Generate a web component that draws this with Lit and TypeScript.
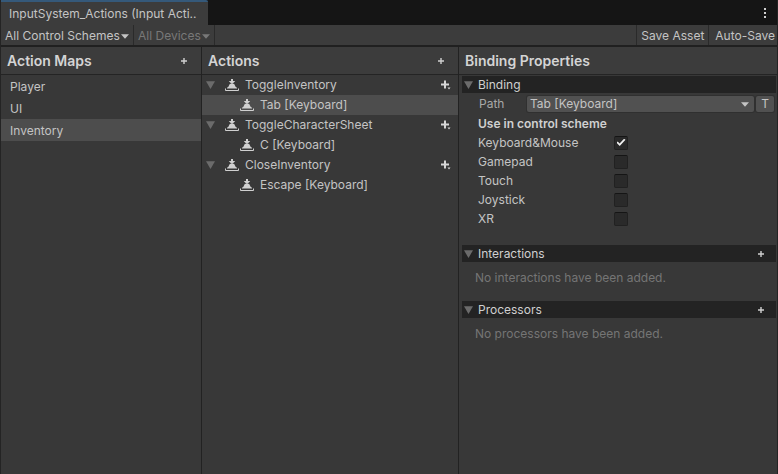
import { LitElement, html, css, svg } from "lit";
import { customElement, state } from "lit/decorators.js";
import { classMap } from "lit/directives/class-map.js";

interface Action {
  name: string;
  bindings: string[];
}

const MAPS = ["Player", "UI", "Inventory"];

const ACTIONS: Action[] = [
  { name: "ToggleInventory", bindings: ["Tab [Keyboard]"] },
  { name: "ToggleCharacterSheet", bindings: ["C [Keyboard]"] },
  { name: "CloseInventory", bindings: ["Escape [Keyboard]"] },
];

const SCHEMES = ["Keyboard&Mouse", "Gamepad", "Touch", "Joystick", "XR"];

const fold = html`<svg class="fold" width="9" height="8" viewBox="0 0 9 8" aria-hidden="true">
  <path d="M0 0.3H9L4.5 8Z" fill="#6b6b6b" />
</svg>`;

const caret = html`<svg class="caret" width="8" height="5" viewBox="0 0 8 5" aria-hidden="true">
  <path d="M0 0.3H8L4 4.8Z" fill="currentColor" />
</svg>`;

const plus = html`<svg width="8" height="8" viewBox="0 0 8 8" aria-hidden="true">
  <path d="M3.3 1H4.7V3.3H7V4.7H4.7V7H3.3V4.7H1V3.3H3.3Z" fill="#d0d0d0" />
</svg>`;

const plusMenu = html`<svg width="11" height="10" viewBox="0 0 11 10" aria-hidden="true">
  <path d="M4 0.5H6V3.5H9V5.5H6V8.5H4V5.5H1V3.5H4Z" fill="#d6d6d6" />
  <path d="M7.5 7.5H10.5L9 9.5Z" fill="#d6d6d6" />
</svg>`;

const press = html`<svg class="press" width="14" height="12" viewBox="0 0 14 12" aria-hidden="true">
  ${svg`
    <path d="M6 0H8V2H10.2L7.6 4.8H6.4L3.8 2H6Z" fill="#d0d0d0" />
    <path d="M2 9.5V8.8C3.2 8.4 3.7 7.6 4 6.6C4.3 5.6 4.7 5 5.6 4.8H8.4C9.3 5 9.7 5.6 10 6.6C10.3 7.6 10.8 8.4 12 8.8V9.5Z" fill="#d0d0d0" />
    <path d="M0.5 9.5V11.5H13.5V9.5" fill="none" stroke="#d0d0d0" stroke-width="1" />
  `}
</svg>`;

@customElement("app-root")
export class AppRoot extends LitElement {
  @state() private selectedMap = "Inventory";
  @state() private selectedBinding = "Tab [Keyboard]";

  static styles = css`
    :host {
      display: flex;
      flex-direction: column;
      min-height: 100vh;
      box-sizing: border-box;
      background: #383838;
      color: #c4c4c4;
      font: 12px/16px Inter, "Noto Sans", sans-serif;
      border-left: 1px solid #242424;
      border-right: 1px solid #242424;
    }
    * {
      box-sizing: border-box;
    }
    button,
    select {
      font: inherit;
      color: inherit;
      border: 0;
      margin: 0;
      padding: 0;
      background: none;
      appearance: none;
      border-radius: 0;
      text-align: left;
    }
    h2,
    h3,
    p,
    ul {
      margin: 0;
      padding: 0;
      list-style: none;
    }
    svg {
      display: block;
      flex: none;
    }
    .tabs {
      display: flex;
      justify-content: space-between;
      align-items: center;
      height: 25px;
      background: #151515;
    }
    .tab {
      height: 25px;
      padding: 0 11px 0 8px;
      background: #3c3c3c;
      border-top: 2px solid #35597a;
      border-radius: 0 2px 0 0;
    }
    .more {
      padding: 0 10px;
    }
    .toolbar {
      display: flex;
      height: 22px;
      background: #3c3c3c;
      border-bottom: 2px solid #202020;
    }
    .space {
      flex: 1;
    }
    .drop {
      display: flex;
      position: relative;
      border-right: 1px solid #2a2a2a;
    }
    .drop select {
      padding: 1px 13px 0 4px;
    }
    .drop .caret {
      position: absolute;
      right: 4px;
      top: 9px;
      pointer-events: none;
    }
    .drop.off {
      color: #787878;
    }
    .drop.off select {
      opacity: 1;
    }
    .toolbar button {
      border-left: 1px solid #2a2a2a;
      padding: 1px 4px 0;
      white-space: nowrap;
    }
    .toolbar .auto {
      padding: 2px 2px 0 6px;
    }
    .panes {
      flex: 1;
      display: grid;
      grid-template-columns: 201fr 257fr 318fr;
    }
    .pane {
      min-width: 0;
      border-right: 1px solid #222;
    }
    .pane:last-child {
      border-right: 0;
    }
    .head {
      display: flex;
      align-items: center;
      justify-content: space-between;
      height: 28px;
      padding: 0 13px 0 6px;
      background: #3c3c3c;
      border-bottom: 1px solid #242424;
    }
    h2 {
      font-size: 14px;
      line-height: 20px;
      font-weight: 600;
      color: #d4d4d4;
    }
    .row {
      display: flex;
      align-items: center;
      width: 100%;
      height: 20px;
    }
    .row.selected {
      background: #4d4d4d;
    }
    .map {
      height: 22px;
      padding: 2px 0 0 9px;
    }
    .action {
      padding: 0 7px 0 4px;
    }
    .action .press {
      margin: 0 6px 0 10px;
    }
    .action .name {
      flex: 1;
    }
    .binding {
      padding-left: 38px;
      gap: 6px;
    }
    .props {
      padding: 1px 1px 0 3px;
    }
    .bar {
      display: flex;
      align-items: center;
      justify-content: space-between;
      height: 17px;
      padding: 0 11px 0 2px;
      background: #232323;
      color: #d0d0d0;
    }
    .bar h3 {
      font: inherit;
    }
    .title {
      display: flex;
      align-items: center;
      gap: 5px;
    }
    .fields {
      display: flex;
      flex-direction: column;
      padding: 3px 2px 17px 16px;
    }
    .path {
      display: flex;
      gap: 2px;
      height: 16px;
    }
    .path label {
      width: 47px;
      padding-left: 1px;
      color: #a8a8a8;
    }
    .picker {
      flex: 1;
      display: flex;
      position: relative;
    }
    .picker select {
      flex: 1;
      padding-left: 3px;
      background: #515151;
      box-shadow: 0 0 0 1px #303030;
      border-radius: 2px;
    }
    .picker .caret {
      position: absolute;
      right: 5px;
      top: 6px;
      pointer-events: none;
    }
    .text {
      width: 18px;
      text-align: center;
      background: #515151;
      box-shadow: 0 0 0 1px #303030;
      border-radius: 2px;
    }
    .legend {
      height: 21px;
      padding-top: 4px;
      font-weight: 600;
      color: #d0d0d0;
    }
    .scheme {
      display: flex;
      align-items: center;
      height: 19px;
    }
    .scheme label {
      width: 136px;
    }
    input {
      appearance: none;
      display: grid;
      place-items: center;
      width: 14px;
      height: 14px;
      margin: 0;
      background: #2a2a2a;
      border: 1px solid #212121;
      border-top-color: #151515;
      border-radius: 2px;
    }
    input:checked::before {
      content: "";
      width: 9px;
      height: 8px;
      background: #f0f0f0;
      clip-path: polygon(0 52%, 14% 38%, 34% 62%, 84% 2%, 100% 16%, 36% 94%);
    }
    .empty {
      height: 39px;
      padding: 8px 0 0 13px;
      color: #757575;
    }
  `;

  private head(title: string, add?: string) {
    return html`<div class="head">
      <h2>${title}</h2>
      ${add ? html`<button aria-label=${add}>${plus}</button>` : ""}
    </div>`;
  }

  private bar(title: string, add?: string) {
    return html`<div class="bar">
      <h3><button class="title" aria-expanded="true">${fold}${title}</button></h3>
      ${add ? html`<button aria-label=${add}>${plus}</button>` : ""}
    </div>`;
  }

  private action(a: Action) {
    return html`<li>
      <div class="row action">
        <button aria-label="Fold ${a.name}">${fold}</button>
        ${press}
        <span class="name">${a.name}</span>
        <button aria-label="Add binding">${plusMenu}</button>
      </div>
      ${a.bindings.map(
        (b) => html`<button
          class=${classMap({ row: true, binding: true, selected: b === this.selectedBinding })}
          @click=${() => (this.selectedBinding = b)}
        >${press}${b}</button>`
      )}
    </li>`;
  }

  render() {
    return html`
      <div class="tabs">
        <button class="tab">InputSystem_Actions (Input Acti..</button>
        <button class="more" aria-label="Window menu">
          <svg width="3" height="10" viewBox="0 0 3 10"><path d="M0 0h2v2h-2zM0 4h2v2h-2zM0 8h2v2h-2z" fill="#d0d0d0" /></svg>
        </button>
      </div>
      <div class="toolbar">
        <div class="drop">
          <select aria-label="Control scheme"><option>All Control Schemes</option></select>${caret}
        </div>
        <div class="drop off">
          <select aria-label="Device" disabled><option>All Devices</option></select>${caret}
        </div>
        <div class="space"></div>
        <button>Save Asset</button>
        <button class="auto">Auto-Save</button>
      </div>
      <main class="panes">
        <section class="pane">
          ${this.head("Action Maps", "Add action map")}
          <ul>
            ${MAPS.map(
              (m) => html`<li><button
                class=${classMap({ row: true, map: true, selected: m === this.selectedMap })}
                @click=${() => (this.selectedMap = m)}
              >${m}</button></li>`
            )}
          </ul>
        </section>
        <section class="pane">
          ${this.head("Actions", "Add action")}
          <ul>${ACTIONS.map((a) => this.action(a))}</ul>
        </section>
        <section class="pane">
          ${this.head("Binding Properties")}
          <div class="props">
            ${this.bar("Binding")}
            <div class="fields">
              <div class="path">
                <label for="path">Path</label>
                <div class="picker">
                  <select id="path"><option>Tab [Keyboard]</option></select>${caret}
                </div>
                <button class="text" aria-label="Edit path as text">T</button>
              </div>
              <div class="legend">Use in control scheme</div>
              ${SCHEMES.map(
                (s, i) => html`<div class="scheme">
                  <label for="scheme-${i}">${s}</label>
                  <input id="scheme-${i}" type="checkbox" ?checked=${i === 0} />
                </div>`
              )}
            </div>
            ${this.bar("Interactions", "Add interaction")}
            <p class="empty">No interactions have been added.</p>
            ${this.bar("Processors", "Add processor")}
            <p class="empty">No processors have been added.</p>
          </div>
        </section>
      </main>
    `;
  }
}
